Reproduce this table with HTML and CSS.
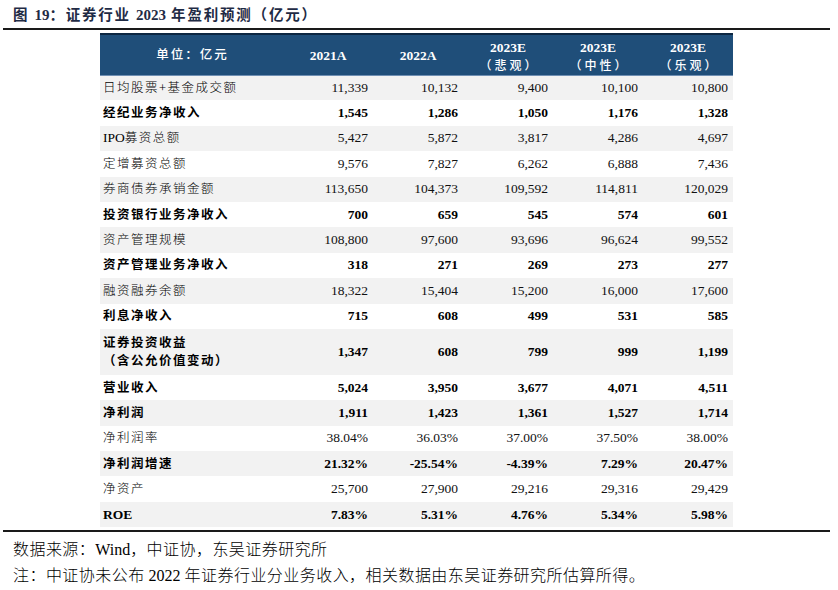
FILE: index.html
```html
<!DOCTYPE html>
<html lang="zh">
<head>
<meta charset="utf-8">
<title>证券行业 2023 年盈利预测</title>
<link rel="stylesheet" href="styles.css">
</head>
<body>
<div class="page">
  <div class="title-bar">
    <h1 class="title">图 <span class="num">19</span>：证券行业 <span class="num">2023</span> 年盈利预测（亿元）</h1>
  </div>
  <div class="table-wrap">
    <table class="data">
      <colgroup>
        <col class="c-label"><col class="c-val"><col class="c-val"><col class="c-val"><col class="c-val"><col class="c-val">
      </colgroup>
      <thead>
        <tr>
          <th class="h-label">单位：亿元</th>
          <th><span class="h-year">2021A</span></th>
          <th><span class="h-year">2022A</span></th>
          <th><span class="h-year">2023E</span><span class="h-sub">（悲观）</span></th>
          <th><span class="h-year">2023E</span><span class="h-sub">（中性）</span></th>
          <th><span class="h-year">2023E</span><span class="h-sub">（乐观）</span></th>
        </tr>
      </thead>
      <tbody>
        <tr class="odd"><td class="lbl">日均股票+基金成交额</td><td>11,339</td><td>10,132</td><td>9,400</td><td>10,100</td><td>10,800</td></tr>
        <tr class="bold"><td class="lbl">经纪业务净收入</td><td>1,545</td><td>1,286</td><td>1,050</td><td>1,176</td><td>1,328</td></tr>
        <tr class="odd"><td class="lbl"><span class="tight">IPO</span>募资总额</td><td>5,427</td><td>5,872</td><td>3,817</td><td>4,286</td><td>4,697</td></tr>
        <tr><td class="lbl">定增募资总额</td><td>9,576</td><td>7,827</td><td>6,262</td><td>6,888</td><td>7,436</td></tr>
        <tr class="odd"><td class="lbl">券商债券承销金额</td><td>113,650</td><td>104,373</td><td>109,592</td><td>114,811</td><td>120,029</td></tr>
        <tr class="bold"><td class="lbl">投资银行业务净收入</td><td>700</td><td>659</td><td>545</td><td>574</td><td>601</td></tr>
        <tr class="odd"><td class="lbl">资产管理规模</td><td>108,800</td><td>97,600</td><td>93,696</td><td>96,624</td><td>99,552</td></tr>
        <tr class="bold"><td class="lbl">资产管理业务净收入</td><td>318</td><td>271</td><td>269</td><td>273</td><td>277</td></tr>
        <tr class="odd"><td class="lbl">融资融券余额</td><td>18,322</td><td>15,404</td><td>15,200</td><td>16,000</td><td>17,600</td></tr>
        <tr class="bold"><td class="lbl">利息净收入</td><td>715</td><td>608</td><td>499</td><td>531</td><td>585</td></tr>
        <tr class="odd bold tall"><td class="lbl">证券投资收益<br>（含公允价值变动）</td><td>1,347</td><td>608</td><td>799</td><td>999</td><td>1,199</td></tr>
        <tr class="bold"><td class="lbl">营业收入</td><td>5,024</td><td>3,950</td><td>3,677</td><td>4,071</td><td>4,511</td></tr>
        <tr class="odd bold"><td class="lbl">净利润</td><td>1,911</td><td>1,423</td><td>1,361</td><td>1,527</td><td>1,714</td></tr>
        <tr><td class="lbl">净利润率</td><td>38.04%</td><td>36.03%</td><td>37.00%</td><td>37.50%</td><td>38.00%</td></tr>
        <tr class="odd bold"><td class="lbl">净利润增速</td><td>21.32%</td><td>-25.54%</td><td>-4.39%</td><td>7.29%</td><td>20.47%</td></tr>
        <tr><td class="lbl">净资产</td><td>25,700</td><td>27,900</td><td>29,216</td><td>29,316</td><td>29,429</td></tr>
        <tr class="odd bold"><td class="lbl latin">ROE</td><td>7.83%</td><td>5.31%</td><td>4.76%</td><td>5.34%</td><td>5.98%</td></tr>
      </tbody>
    </table>
  </div>
  <div class="notes">
    <p class="note">数据来源：<span class="latin">Wind</span>，中证协，东吴证券研究所</p>
    <p class="note">注：中证协未公布 <span class="latin">2022</span> 年证券行业分业务收入，相关数据由东吴证券研究所估算所得。</p>
  </div>
</div>
</body>
</html>
```

FILE: styles.css
```css
* { box-sizing: border-box; }

html, body {
  margin: 0;
  padding: 0;
  background: #ffffff;
}

.page {
  width: 838px;
  height: 590px;
  padding: 0 8px 0 3px;
  font-family: "Liberation Serif", "Noto Sans CJK SC", serif;
  color: #111111;
}

.title-bar {
  height: 30px;
  border-bottom: 2px solid #1a1a1a;
  padding: 5px 0 0 10px;
}

.title {
  margin: 0;
  font-family: "Noto Sans CJK SC", sans-serif;
  font-size: 14.5px;
  line-height: 18px;
  font-weight: 700;
  letter-spacing: 1.8px;
  color: #1f2b45;
}

.title .num {
  font-family: "Liberation Serif", serif;
  font-size: 15px;
  letter-spacing: 0;
}

.table-wrap {
  padding: 3px 0 3px 97px;
  border-bottom: 2px solid #1a1a1a;
}

.data {
  width: 633px;
  table-layout: fixed;
  border-collapse: collapse;
  border-spacing: 0;
}

.c-label { width: 183px; }
.c-val { width: 90px; }

.data thead tr {
  height: 41px;
  background: #1f4e79;
  border-top: 2px solid #0d2742;
  border-bottom: 1px solid #6f8fb3;
}

.data th {
  padding: 2px 0 0 0;
  color: #ffffff;
  font-weight: 700;
  text-align: center;
  vertical-align: middle;
  font-size: 13.5px;
  line-height: 17px;
}

.data th.h-label {
  font-family: "Liberation Serif", "Noto Sans CJK SC", serif;
  font-weight: 500;
  font-size: 12.5px;
  letter-spacing: 2px;
  padding-left: 2px;
}

.h-year {
  display: block;
  font-family: "Liberation Serif", serif;
  font-weight: 700;
}

.h-sub {
  display: block;
  font-family: "Noto Sans CJK SC", sans-serif;
  font-weight: 500;
  font-size: 12px;
  letter-spacing: 3px;
  padding-left: 3px;
}

.data tbody tr {
  height: 25.4px;
}

.data tbody tr.odd {
  background: #f2f2f2;
}

.data tbody tr.tall {
  height: 46px;
}

.data td {
  padding: 0 5px 0 0;
  text-align: right;
  vertical-align: middle;
  font-family: "Liberation Serif", serif;
  font-size: 13.5px;
  line-height: 18px;
  white-space: nowrap;
  color: #111111;
}

.data td.lbl {
  text-align: left;
  padding: 0 0 0 3px;
  font-family: "Liberation Serif", "Noto Sans CJK SC", serif;
  font-size: 12.5px;
  font-weight: 300;
  letter-spacing: 1.5px;
  color: #000000;
}

.data td.lbl .tight {
  letter-spacing: 0;
  font-size: 13.5px;
}

.data td.lbl.latin {
  letter-spacing: 0;
  font-size: 13.5px;
}

.data tr.bold td {
  font-weight: 700;
  color: #000000;
}

.data tr.bold td.lbl {
  font-weight: 700;
  color: #000000;
}

.notes {
  padding: 4px 0 0 10px;
}

.note {
  margin: 0;
  font-family: "Noto Sans CJK SC", sans-serif;
  font-size: 16px;
  font-weight: 300;
  letter-spacing: 0.45px;
  line-height: 24px;
  color: #000000;
}

.note .latin {
  font-family: "Liberation Serif", serif;
  font-size: 16px;
  letter-spacing: 0;
}
```
